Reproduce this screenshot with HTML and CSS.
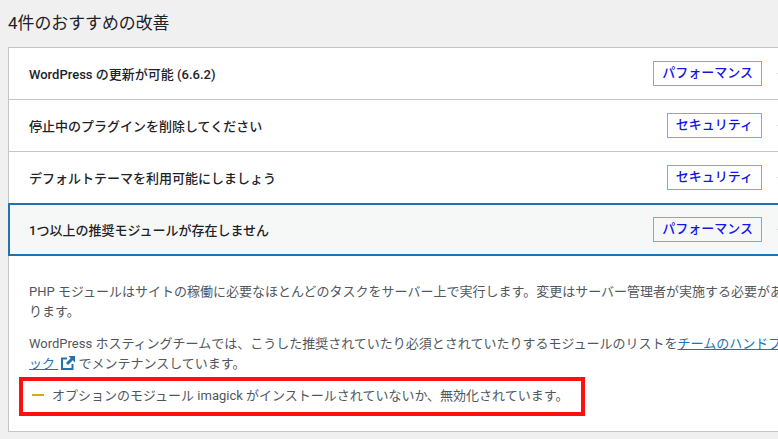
FILE: index.html
```html
<!DOCTYPE html>
<html>
	<head>
		<meta charset="utf-8" />
		<title>サイトヘルス</title>
		<link rel="stylesheet" href="styles.css">
	</head>
	<body>
		<h2 class="issues_title">4件のおすすめの改善</h2>
		<div class="accordion">
			<div class="acc_row">
				<span class="acc_title">WordPress の更新が可能 (6.6.2)</span>
				<span class="badge">パフォーマンス</span>
				<span class="acc_icon"></span>
			</div>
			<div class="acc_row">
				<span class="acc_title">停止中のプラグインを削除してください</span>
				<span class="badge">セキュリティ</span>
				<span class="acc_icon"></span>
			</div>
			<div class="acc_row">
				<span class="acc_title">デフォルトテーマを利用可能にしましょう</span>
				<span class="badge">セキュリティ</span>
				<span class="acc_icon"></span>
			</div>
			<div class="acc_row acc_open">
				<span class="acc_title">1つ以上の推奨モジュールが存在しません</span>
				<span class="badge">パフォーマンス</span>
				<span class="acc_icon acc_icon_up"></span>
			</div>
			<div class="acc_panel">
				<p>PHP モジュールはサイトの稼働に必要なほとんどのタスクをサーバー上で実行します。変更はサーバー管理者が実施する必要があります。</p>
				<p>WordPress ホスティングチームでは、こうした推奨されていたり必須とされていたりするモジュールのリストを<a href="#">チームのハンドブック </a><svg class="ext_icon" viewBox="0 0 14 14"><path d="M6 2.500H1V13h10.500V8" fill="none" stroke="#2271b1" stroke-width="2"/><path d="M7.500 0H14v6.500l-2.200-2.200L7 9 5 7l4.700-4.800z" fill="#2271b1"/></svg> でメンテナンスしています。</p>
				<div class="module_line">
					<span class="dash"></span>オプションのモジュール imagick がインストールされていないか、無効化されています。
					<span class="highlight"></span>
				</div>
			</div>
		</div>
	</body>
</html>
```

FILE: styles.css
```css
*{
	box-sizing: border-box;
}
html,body{
	margin: 0;
	padding: 0;
	height: 439px;
	overflow: hidden;
}
body{
	background: #f0f0f1;
	color: #1d2327;
	font-family: Roboto, "Noto Sans CJK JP", sans-serif;
	font-size: 13px;
	padding: 0 0 0 8px;
}
.issues_title{
	margin: 0;
	height: 47px;
	padding-top: 11px;
	font-size: 16.9px;
	line-height: 24px;
	font-weight: 400;
}
.accordion{
	width: 812px;
	height: 385px;
	background: #fff;
	border: 1px solid #c3c4c7;
}
.acc_row{
	display: flex;
	align-items: center;
	height: 52px;
	padding: 0 0 0 20px;
	border-bottom: 1px solid #c3c4c7;
}
.acc_title{
	flex: 1;
	font-weight: 500;
}
.acc_open{
	height: 53px;
	margin: -1px 0 0 -1px;
	padding-left: 19px;
	background: #f6f7f7;
	border: 2px solid #2271b1;
}
.badge{
	padding: 0 8px;
	height: 25px;
	line-height: 22px;
	border: 1px solid #72aee6;
	color: #1414e6;
	font-weight: 500;
}
.acc_icon{
	width: 7px;
	height: 7px;
	margin: 0 33px 0 17px;
	border-right: 2px solid #50575e;
	border-bottom: 2px solid #50575e;
	transform: rotate(45deg);
}
.acc_icon_up{
	margin-right: 31px;
	transform: rotate(225deg);
}
.acc_panel{
	padding: 13px 20px 0;
	color: #50575e;
	line-height: 19.5px;
}
.acc_panel p{
	margin: 13px 0;
	width: 760px;
}
.acc_panel a{
	color: #2271b1;
}
.ext_icon{
	width: 14px;
	height: 14px;
	margin-left: 3px;
	vertical-align: -2px;
}
.module_line{
	position: relative;
	height: 20px;
	padding-left: 23px;
}
.dash{
	position: absolute;
	left: 3px;
	top: 8px;
	width: 12px;
	height: 2px;
	background: #dba617;
}
.highlight{
	position: absolute;
	left: -10px;
	top: -9px;
	width: 566px;
	height: 39px;
	border: 4px solid #ff0f0f;
}
```
